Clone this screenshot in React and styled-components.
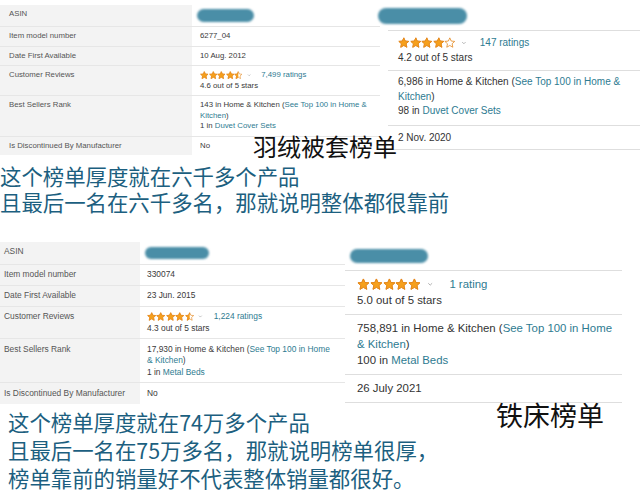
import React, { useId } from 'react';
import styled, { createGlobalStyle } from 'styled-components';

const GlobalStyle = createGlobalStyle`
	html, body {
		margin: 0;
		padding: 0;
		background: #fff;
	}

	body {
		width: 640px;
		height: 499px;
		overflow: hidden;
		font-family: "Liberation Sans", Arial, sans-serif;
	}
`;

const Page = styled.div`
	width: 640px;
	height: 499px;
	display: flex;
	flex-direction: column;
	overflow: hidden;
`;

// one pasted screenshot: product details table + the overlapping side card
const Shot = styled.div`
	position: relative;
	display: flex;
	align-items: flex-start;
	height: ${p => p.$h}px;
	margin-top: ${p => p.$mt || 0}px;
	flex-shrink: 0;
`;

const Table = styled.div`
	width: ${p => p.$w}px;
	margin-top: ${p => p.$mt}px;
	font-size: ${p => p.$fs}px;
	line-height: ${p => p.$lh}px;
	color: #3a3a3a;
	flex-shrink: 0;
`;

const Row = styled.div`
	display: grid;
	grid-template-columns: ${p => p.$labelW}px 1fr;
	border-bottom: 1px solid #e6e6e6;

	&:last-child {
		border-bottom: none;
	}
`;

const Label = styled.div`
	background: #f3f3f3;
	color: #555;
	padding: ${p => p.$pad};
	white-space: nowrap;
`;

const Value = styled.div`
	padding: ${p => p.$pad};
	background: #fff;
`;

const Card = styled.div`
	width: ${p => p.$w}px;
	margin-left: ${p => p.$ml}px;
	font-size: ${p => p.$fs}px;
	line-height: ${p => p.$lh}px;
	color: #333;
	background: #fff;
	flex-shrink: 0;
`;

const BlobRow = styled.div`
	height: ${p => p.$h}px;
	display: flex;
	align-items: flex-start;
`;

const Blob = styled.div`
	width: ${p => p.$w}px;
	height: ${p => p.$h}px;
	margin-top: ${p => p.$mt || 0}px;
	margin-left: ${p => p.$ml || 0}px;
	border-radius: ${p => p.$h / 2}px;
	background: #4a8ea7;
	filter: blur(0.8px);
`;

const CardRow = styled.div`
	border-top: 1px solid #dedede;
	padding: ${p => p.$pad};

	&:last-child {
		border-bottom: 1px solid #dedede;
	}
`;

const Line = styled.div`
	white-space: nowrap;
`;

const Link = styled.span`
	color: #2e7b91;
`;

const RatingLine = styled.div`
	display: flex;
	align-items: center;
	height: ${p => p.$h}px;
`;

const Stars = styled.span`
	display: inline-flex;
	align-items: center;
`;

const Chevron = styled.svg`
	margin-left: ${p => p.$ml}px;
	margin-right: ${p => p.$mr}px;
	flex-shrink: 0;
`;

const Title = styled.div`
	position: absolute;
	left: ${p => p.$x}px;
	top: ${p => p.$y}px;
	font-family: "Noto Sans CJK SC", "Noto Sans", sans-serif;
	font-size: ${p => p.$fs}px;
	line-height: 30px;
	color: #111;
	white-space: nowrap;
`;

const Note = styled.div`
	margin-top: ${p => p.$mt}px;
	padding-left: ${p => p.$pl}px;
	font-family: "Noto Sans CJK SC", "Noto Sans", sans-serif;
	font-size: 21.4px;
	line-height: ${p => p.$lh}px;
	color: #1c5f80;
	white-space: nowrap;
	flex-shrink: 0;
`;

const STAR = "12,1.8 15,8.4 22.2,9.1 16.8,14 18.3,21.2 12,17.5 5.7,21.2 7.2,14 1.8,9.1 9,8.4";

function Star({ size, fill }) {
	const id = useId();
	return (
		<svg width={size} height={size} viewBox="0 0 24 24">
			<defs>
				<clipPath id={id}>
					<rect x="0" y="0" width={24 * fill} height="24" />
				</clipPath>
			</defs>
			<polygon points={STAR} fill="#fff" stroke="#e3851a" strokeWidth="1.6" strokeLinejoin="round" />
			<polygon points={STAR} fill="#f6a01c" stroke="#e3851a" strokeWidth="1.6" strokeLinejoin="round" clipPath={`url(#${id})`} />
		</svg>
	);
}

function Rating({ fills, size, h, chevML, chevMR, count }) {
	return (
		<RatingLine $h={h}>
			<Stars>
				{fills.map((f, i) => <Star key={i} size={size} fill={f} />)}
			</Stars>
			<Chevron $ml={chevML} $mr={chevMR} width={size * 0.5} height={size * 0.5} viewBox="0 0 10 10">
				<path d="M2 3.5 L5 6.5 L8 3.5" fill="none" stroke="#9a9a9a" strokeWidth="1.2" />
			</Chevron>
			<Link>{count}</Link>
		</RatingLine>
	);
}

function SpecTable({ w, mt, fs, lh, labelW, labelPad, valuePad, blob, rows }) {
	return (
		<Table $w={w} $mt={mt} $fs={fs} $lh={lh}>
			<Row $labelW={labelW}>
				<Label $pad={labelPad}>ASIN</Label>
				<Value $pad={valuePad}>
					<Blob $w={blob.w} $h={blob.h} $ml={blob.ml} $mt={blob.mt} />
				</Value>
			</Row>
			{rows.map(r => (
				<Row key={r.label} $labelW={labelW}>
					<Label $pad={labelPad}>{r.label}</Label>
					<Value $pad={valuePad}>{r.value}</Value>
				</Row>
			))}
		</Table>
	);
}

export default function App() {
	return (
		<>
			<GlobalStyle />
			<Page>
				<Shot $h={160}>
					<SpecTable
						w={380} mt={5} fs={7.8} lh={10.5} labelW={192}
						labelPad="4px 9px 4px" valuePad="4px 8px 4px"
						blob={{ w: 57, h: 13, ml: -3, mt: 0 }}
						rows={[
							{ label: "Item model number", value: "6277_04" },
							{ label: "Date First Available", value: "10 Aug. 2012" },
							{
								label: "Customer Reviews",
								value: <>
									<Rating fills={[1, 1, 1, 1, 0.5]} size={8.6} h={10.5} chevML={4} chevMR={10} count="7,499 ratings" />
									<Line>4.6 out of 5 stars</Line>
								</>
							},
							{
								label: "Best Sellers Rank",
								value: <>
									<Line>143 in Home &amp; Kitchen (<Link>See Top 100 in Home &amp;</Link></Line>
									<Line><Link>Kitchen</Link>)</Line>
									<Line>1 in <Link>Duvet Cover Sets</Link></Line>
								</>
							},
							{ label: "Is Discontinued By Manufacturer", value: "No" }
						]}
					/>
					<Card $w={252} $ml={8} $fs={10} $lh={14.5}>
						<BlobRow $h={30}>
							<Blob $w={89} $h={16} $ml={-10} $mt={8} />
						</BlobRow>
						<CardRow $pad="5px 10px 5px">
							<Rating fills={[1, 1, 1, 1, 0]} size={11.6} h={14.5} chevML={5} chevMR={13} count="147 ratings" />
							<Line>4.2 out of 5 stars</Line>
						</CardRow>
						<CardRow $pad="4px 10px 6px">
							<Line>6,986 in Home &amp; Kitchen (<Link>See Top 100 in Home &amp;</Link></Line>
							<Line><Link>Kitchen</Link>)</Line>
							<Line>98 in <Link>Duvet Cover Sets</Link></Line>
						</CardRow>
						<CardRow $pad="5px 10px 4px">2 Nov. 2020</CardRow>
					</Card>
					<Title $x={253} $y={131} $fs={24}>羽绒被套榜单</Title>
				</Shot>

				<Note $mt={3} $pl={0} $lh={26}>
					<div>这个榜单厚度就在六千多个产品</div>
					<div>且最后一名在六千多名，那就说明整体都很靠前</div>
				</Note>

				<Shot $h={160} $mt={27}>
					<SpecTable
						w={345} mt={0} fs={8.4} lh={11.5} labelW={140}
						labelPad="4.3px 4px" valuePad="4.3px 7px"
						blob={{ w: 64, h: 12, ml: -2, mt: 1 }}
						rows={[
							{ label: "Item model number", value: "330074" },
							{ label: "Date First Available", value: "23 Jun. 2015" },
							{
								label: "Customer Reviews",
								value: <>
									<Rating fills={[1, 1, 1, 1, 0.5]} size={9.4} h={11.5} chevML={4} chevMR={11} count="1,224 ratings" />
									<Line>4.3 out of 5 stars</Line>
								</>
							},
							{
								label: "Best Sellers Rank",
								value: <>
									<Line>17,930 in Home &amp; Kitchen (<Link>See Top 100 in Home</Link></Line>
									<Line><Link>&amp; Kitchen</Link>)</Line>
									<Line>1 in <Link>Metal Beds</Link></Line>
								</>
							},
							{ label: "Is Discontinued By Manufacturer", value: "No" }
						]}
					/>
					<Card $w={277} $ml={0} $fs={11.4} $lh={16}>
						<BlobRow $h={28}>
							<Blob $w={78} $h={14} $ml={5} $mt={7} />
						</BlobRow>
						<CardRow $pad="5px 12px 6px">
							<Rating fills={[1, 1, 1, 1, 1]} size={12.8} h={16} chevML={6} chevMR={16} count="1 rating" />
							<Line>5.0 out of 5 stars</Line>
						</CardRow>
						<CardRow $pad="5px 12px 6px">
							<Line>758,891 in Home &amp; Kitchen (<Link>See Top 100 in Home</Link></Line>
							<Line><Link>&amp; Kitchen</Link>)</Line>
							<Line>100 in <Link>Metal Beds</Link></Line>
						</CardRow>
						<CardRow $pad="5px 12px 6px">26 July 2021</CardRow>
					</Card>
					<Title $x={496} $y={158} $fs={27}>铁床榜单</Title>
				</Shot>

				<Note $mt={6} $pl={8} $lh={28}>
					<div>这个榜单厚度就在74万多个产品</div>
					<div>且最后一名在75万多名，那就说明榜单很厚，</div>
					<div>榜单靠前的销量好不代表整体销量都很好。</div>
				</Note>
			</Page>
		</>
	);
}
